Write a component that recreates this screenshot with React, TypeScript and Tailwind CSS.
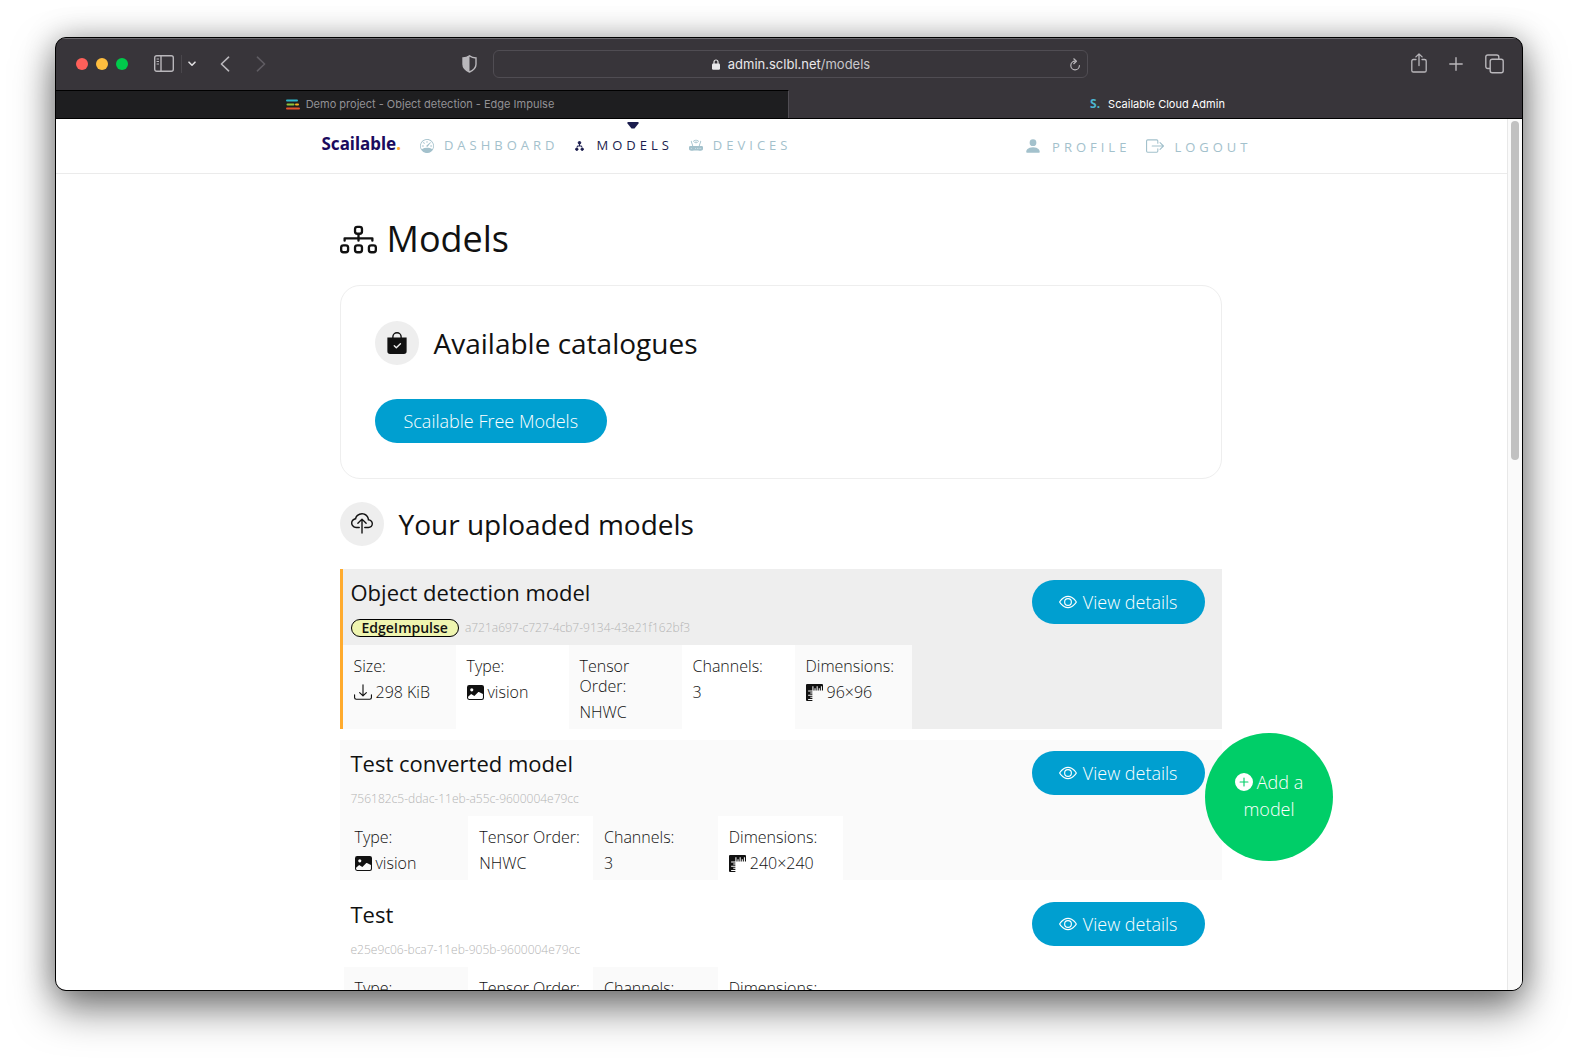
import React from "react";
import {
  BsSpeedometer,
  BsDiagram3,
  BsRouterFill,
  BsPersonFill,
  BsBoxArrowRight,
  BsBagCheckFill,
  BsCloudUpload,
  BsEye,
  BsDownload,
  BsImageFill,
  BsRulers,
  BsPlusCircleFill,
} from "react-icons/bs";

type Spec = { label: string; value: string; icon?: "download" | "image" | "rulers" };
type Model = {
  name: string;
  id: string;
  badge?: string;
  specs: Spec[];
  look: "highlight" | "shaded" | "plain";
};

const models: Model[] = [
  {
    name: "Object detection model",
    id: "a721a697-c727-4cb7-9134-43e21f162bf3",
    badge: "EdgeImpulse",
    look: "highlight",
    specs: [
      { label: "Size:", value: "298 KiB", icon: "download" },
      { label: "Type:", value: "vision", icon: "image" },
      { label: "Tensor Order:", value: "NHWC" },
      { label: "Channels:", value: "3" },
      { label: "Dimensions:", value: "96×96", icon: "rulers" },
    ],
  },
  {
    name: "Test converted model",
    id: "756182c5-ddac-11eb-a55c-9600004e79cc",
    look: "shaded",
    specs: [
      { label: "Type:", value: "vision", icon: "image" },
      { label: "Tensor Order:", value: "NHWC" },
      { label: "Channels:", value: "3" },
      { label: "Dimensions:", value: "240×240", icon: "rulers" },
    ],
  },
  {
    name: "Test",
    id: "e25e9c06-bca7-11eb-905b-9600004e79cc",
    look: "plain",
    specs: [
      { label: "Type:", value: "vision", icon: "image" },
      { label: "Tensor Order:", value: "NHWC" },
      { label: "Channels:", value: "3" },
      { label: "Dimensions:", value: "240×240", icon: "rulers" },
    ],
  },
];

const rowLook = {
  highlight: "border-l-[3px] border-[#ffab2e] bg-[#eeeeee]",
  shaded: "bg-[#fafafa] pl-1",
  plain: "bg-white pl-1",
};
const headLook = { highlight: "pl-2", shaded: "pl-[7px]", plain: "pl-[7px]" };
const gridLook = {
  highlight: "w-[569px] grid-cols-[113px_113px_113px_113px_1fr]",
  shaded: "w-[499px] grid-cols-4",
  plain: "w-[499px] grid-cols-4",
};

function SpecIcon({ kind }: { kind: Spec["icon"] }) {
  if (kind === "download") return <BsDownload className="size-[18px]" />;
  if (kind === "image") return <BsImageFill className="size-[17px]" />;
  if (kind === "rulers") return <BsRulers className="size-[17px]" />;
  return null;
}

function ModelRow({ model }: { model: Model }) {
  return (
    <article className={rowLook[model.look]}>
      <div className={`flex h-[76px] items-start justify-between pr-[17px] ${headLook[model.look]}`}>
        <div>
          <h3 className="mt-[7px] text-[22px]/8 font-normal">{model.name}</h3>
          <p className="mt-2.5 flex items-center gap-1.5 text-[12px]/5 font-light text-[#b4b4b4]">
            {model.badge && (
              <span className="rounded-full border border-black bg-[#eff5b0] px-2.5 text-[14px]/4 font-semibold text-[#111]">
                {model.badge}
              </span>
            )}
            {model.id}
          </p>
        </div>
        <button
          type="button"
          className="mt-[11px] flex h-11 items-center gap-1.5 rounded-full bg-[#009fd0] px-[27px] text-[18px] font-light whitespace-nowrap text-white"
        >
          <BsEye className="size-[18px]" />
          View details
        </button>
      </div>
      <dl className={`grid ${gridLook[model.look]}`}>
        {model.specs.map((spec) => (
          <div key={spec.label} className="bg-[#fafafa] pt-[11px] pr-2 pb-[5px] pl-[11px] even:bg-white">
            <dt className="text-[16px]/5 font-light">{spec.label}</dt>
            <dd className="mt-1 flex items-center gap-1 text-[16px]/6 font-light">
              <SpecIcon kind={spec.icon} />
              {spec.value}
            </dd>
          </div>
        ))}
      </dl>
    </article>
  );
}

function Toolbar() {
  return (
    <div className="flex h-[52px] items-center border-t border-[#6b696e] pr-[18px] pb-0.5 pl-5 text-[#b9b7bb]">
      <div className="flex flex-1 items-center">
        <div className="flex gap-2">
          <button type="button" aria-label="Close" className="size-3 rounded-full bg-[#ff605a]" />
          <button type="button" aria-label="Minimize" className="size-3 rounded-full bg-[#ffbe3f]" />
          <button type="button" aria-label="Zoom" className="size-3 rounded-full bg-[#00ca4b]" />
        </div>
        <button type="button" aria-label="Sidebar" className="ml-[26px]">
          <svg width="20" height="17" viewBox="0 0 20 17" fill="none" stroke="currentColor" strokeWidth="1.4">
            <rect x="0.7" y="0.7" width="18.6" height="15.6" rx="2" />
            <path d="M7 1v15" />
            <path d="M2.6 4h2.4M2.6 6.5h2.4M2.6 9h2.4" strokeWidth="1" />
          </svg>
        </button>
        <span className="ml-[7px] h-[18px] w-px bg-[#4a474c]" />
        <button type="button" aria-label="Tab groups" className="ml-1.5 text-[#dddcde]">
          <svg width="8" height="6" viewBox="0 0 8 6" fill="none" stroke="currentColor" strokeWidth="1.6" strokeLinecap="round" strokeLinejoin="round">
            <path d="M1 1.2l3 3 3-3" />
          </svg>
        </button>
        <button type="button" aria-label="Back" className="ml-6">
          <svg width="10" height="16" viewBox="0 0 10 16" fill="none" stroke="currentColor" strokeWidth="1.6" strokeLinecap="round" strokeLinejoin="round">
            <path d="M8.6 1.2L1.4 8l7.2 6.8" />
          </svg>
        </button>
        <button type="button" aria-label="Forward" className="ml-[26px] text-[#5f5c62]">
          <svg width="10" height="16" viewBox="0 0 10 16" fill="none" stroke="currentColor" strokeWidth="1.6" strokeLinecap="round" strokeLinejoin="round">
            <path d="M1.4 1.2L8.6 8l-7.2 6.8" />
          </svg>
        </button>
        <button type="button" aria-label="Privacy report" className="mr-4 ml-auto">
          <svg width="15" height="18" viewBox="0 0 15 18">
            <path d="M7.5 .8C5.6 2.1 3.4 2.8 1 3v6.2c0 3.6 2.6 6 6.5 7.8 3.9-1.8 6.5-4.2 6.5-7.8V3C11.6 2.8 9.4 2.1 7.5 .8z" fill="none" stroke="currentColor" strokeWidth="1.4" />
            <path d="M7.5 .8C5.6 2.1 3.4 2.8 1 3v6.2c0 3.6 2.6 6 6.5 7.8z" fill="currentColor" />
          </svg>
        </button>
      </div>
      <div className="flex h-7 w-5/12 items-center rounded-md border border-[#504d53] pr-1.5 pl-5 text-[13px] text-[#e9e8ea]">
        <div className="flex flex-1 items-center justify-center gap-2 pt-0.5">
          <svg width="8" height="11" viewBox="0 0 8 11">
            <path d="M2 5V3a2 2 0 0 1 4 0v2" fill="none" stroke="currentColor" strokeWidth="1.2" />
            <rect x="0" y="4.6" width="8" height="6.2" rx="1.2" fill="currentColor" />
          </svg>
          <span>admin.sclbl.net<span className="text-[#c9c8cb]">/models</span></span>
        </div>
        <button type="button" aria-label="Reload" className="pt-0.5">
          <svg width="12" height="13" viewBox="0 0 12 13" fill="none" stroke="#b9b7bb" strokeWidth="1.2" strokeLinecap="round" strokeLinejoin="round">
            <path d="M6.2 3.2a4.3 4.3 0 1 0 4.2 4.5" />
            <path d="M4.8 .8l2.6 2.5-2.6 2.4" />
          </svg>
        </button>
      </div>
      <div className="flex flex-1 items-center justify-end">
        <button type="button" aria-label="Share">
          <svg width="16" height="21" viewBox="0 0 16 21" fill="none" stroke="currentColor" strokeWidth="1.3" strokeLinecap="round" strokeLinejoin="round">
            <path d="M5 6.5H2.4c-1 0-1.6.6-1.6 1.6v9.3c0 1 .6 1.6 1.6 1.6h11.2c1 0 1.6-.6 1.6-1.6V8.1c0-1-.6-1.6-1.6-1.6H11" />
            <path d="M8 12.5V1M4.900 3.900L8 .9l3.100 3" />
          </svg>
        </button>
        <button type="button" aria-label="New tab" className="ml-[22px]">
          <svg width="14" height="14" viewBox="0 0 14 14" stroke="currentColor" strokeWidth="1.4" strokeLinecap="round">
            <path d="M7 .8v12.4M.8 7h12.4" />
          </svg>
        </button>
        <button type="button" aria-label="Tab overview" className="ml-[22px]">
          <svg width="19" height="20" viewBox="0 0 19 20" fill="none" stroke="currentColor" strokeWidth="1.4" strokeLinejoin="round">
            <rect x="5.2" y="5.2" width="13" height="13.5" rx="2" />
            <path d="M5 14.5H2.800c-1.200 0-2-.8-2-2V3c0-1.200.8-2 2-2h9c1.200 0 2 .8 2 2v2" />
          </svg>
        </button>
      </div>
    </div>
  );
}

function TabBar() {
  return (
    <div className="grid h-7 grid-cols-2 text-[11px]">
      <button type="button" className="flex items-center justify-center gap-1.5 border-t border-r border-black border-r-[#504d53] bg-[#1e1e20] pr-1 text-[#929195]">
        <svg width="14" height="11" viewBox="0 0 14 11" strokeWidth="2" strokeLinecap="round">
          <path d="M1 1.5h10" stroke="#2fb5c9" />
          <path d="M1.5 5.5h6" stroke="#8fc43a" />
          <path d="M10 5.5h2" stroke="#f4b223" />
          <path d="M1 9.5h12" stroke="#e5532d" />
        </svg>
        Demo project - Object detection - Edge Impulse
      </button>
      <button type="button" className="flex items-center justify-center gap-2 pl-1 text-white">
        <span className="font-['Noto_Sans',sans-serif] text-[12px] font-bold text-[#4db4cf]">S.</span>
        Scailable Cloud Admin
      </button>
    </div>
  );
}

function SiteHeader() {
  return (
    <header className="border-b border-[#ebebeb]">
      <div className="mx-auto flex h-[54px] max-w-[940px] items-center pl-2.5 text-[13px] font-medium tracking-[4px] text-[#a3c1cc]">
        <a href="#home" className="-mt-1 font-['Noto_Sans',sans-serif] text-[17px] font-bold tracking-normal text-[#1b0b5e]">
          Scailable<span className="text-[#ffab2e]">.</span>
        </a>
        <nav className="flex flex-1 items-center justify-between">
          <div className="flex items-center">
            <a href="#dashboard" className="ml-[19px] flex items-center gap-2.5">
              <BsSpeedometer className="size-3.5" />
              DASHBOARD
            </a>
            <a href="#models" aria-current="page" className="ml-[17px] flex items-center gap-3 text-[#1b1d4e]">
              <svg width="9" height="10" viewBox="0 0 9 10" fill="currentColor" stroke="currentColor">
                <circle cx="4.5" cy="1.8" r="1.3" />
                <circle cx="1.8" cy="8.2" r="1.2" />
                <circle cx="7.2" cy="8.2" r="1.2" />
                <path d="M4.5 3v2M2.3 6.3V5h4.4v1.3" fill="none" strokeWidth="1" />
              </svg>
              <span className="relative">
                MODELS
                <svg className="absolute -top-3.5 left-1/2 -ml-2" width="12" height="7" viewBox="0 0 12 7">
                  <path d="M.5 0h11v1.5L7.5 6.5h-3L.5 1.5z" fill="currentColor" />
                </svg>
              </span>
            </a>
            <a href="#devices" className="ml-4 flex items-center gap-2.5">
              <BsRouterFill className="size-3.5" />
              DEVICES
            </a>
          </div>
          <div className="mt-1 flex items-center">
            <a href="#profile" className="flex items-center gap-2.5">
              <BsPersonFill className="-mt-1 size-[18px]" />
              PROFILE
            </a>
            <a href="#logout" className="ml-4 flex items-center gap-2.5">
              <BsBoxArrowRight className="-mt-1 size-[18px]" />
              LOGOUT
            </a>
          </div>
        </nav>
      </div>
    </header>
  );
}

export default function App() {
  return (
    <div className="flex h-screen flex-col bg-white px-[55px] pt-[37px] pb-[73px] font-['Inter',sans-serif]">
      <div className="relative flex min-h-0 flex-1 flex-col overflow-hidden rounded-[11px] border border-black bg-[#38353a] shadow-[0_18px_40px_rgba(0,0,0,0.5),0_0_30px_rgba(0,0,0,0.25)]">
        <Toolbar />
        <TabBar />
        <div className="flex min-h-0 flex-1 border-t border-black bg-white font-['Open_Sans',sans-serif] text-[#111]">
          <div className="min-w-0 flex-1 overflow-y-auto [scrollbar-width:none]">
            <SiteHeader />
            <main className="mx-auto max-w-[884px] pr-0.5">
              <h1 className="mt-10 flex items-center gap-2.5 text-[36px]/[50px] font-normal">
                <BsDiagram3 className="size-[37px]" />
                Models
              </h1>
              <section className="mt-[21px] rounded-[20px] border border-[#eeeeee] px-[34px] py-[35px]">
                <h2 className="flex items-center gap-[15px] text-[28px]/[44px] font-normal">
                  <span className="flex size-11 items-center justify-center rounded-full bg-[#eeeeee]">
                    <BsBagCheckFill className="size-[22px]" />
                  </span>
                  Available catalogues
                </h2>
                <button type="button" className="mt-[34px] h-11 rounded-full bg-[#009fd0] px-[29px] text-[18px] font-light text-white">
                  Scailable Free Models
                </button>
              </section>
              <h2 className="mt-[23px] flex items-center gap-[15px] text-[28px]/[44px] font-normal">
                <span className="flex size-11 items-center justify-center rounded-full bg-[#eeeeee]">
                  <BsCloudUpload className="size-[22px]" />
                </span>
                Your uploaded models
              </h2>
              <div className="mt-[23px] flex flex-col gap-[11px]">
                {models.map((m) => (
                  <ModelRow key={m.id} model={m} />
                ))}
              </div>
            </main>
          </div>
          <div className="w-[15px] border-l border-[#e8e8e8] bg-[#fafafa] pt-0.5 pl-[3px]">
            <div className="h-[39%] w-2 rounded-full bg-[#c1c1c1]" />
          </div>
        </div>
        <button type="button" className="absolute right-[189px] bottom-[129px] size-32 rounded-full bg-[#00ce68] px-5 pb-0.5 font-['Open_Sans',sans-serif] text-[18px]/[27px] font-light text-white">
          <BsPlusCircleFill className="mr-1 inline size-[18px] align-[-2px]" />
          Add a model
        </button>
      </div>
    </div>
  );
}
